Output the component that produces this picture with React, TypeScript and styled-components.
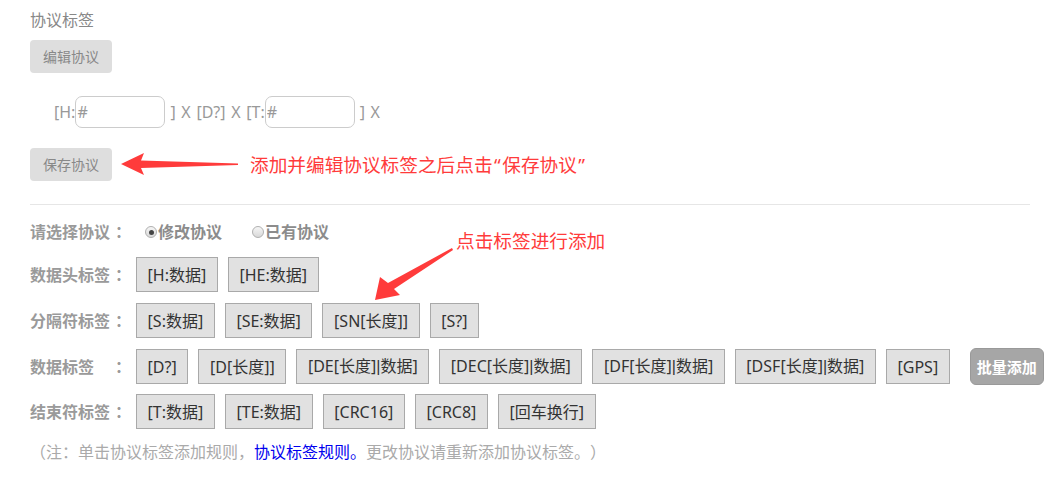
import React from "react";
import styled, { createGlobalStyle } from "styled-components";

const GlobalStyle = createGlobalStyle`
  html, body { margin: 0; padding: 0; background: #fff; }
  body {
    font-family: "Noto Sans", "Noto Sans CJK SC", sans-serif;
    font-size: 16px;
    text-spacing-trim: space-all;
  }
  * { box-sizing: border-box; }
`;

const Page = styled.div`
  padding: 10px 29px 0 30px;
  width: 1059px;
`;

const Title = styled.div`
  font-size: 16px;
  line-height: 20px;
  color: #888;
`;

const GrayButton = styled.button<{ $top: number }>`
  display: block;
  margin-top: ${(p) => p.$top}px;
  width: 82px;
  height: 33px;
  padding: 0;
  border: none;
  border-radius: 4px;
  background: #dedede;
  color: #888;
  font-family: inherit;
  font-size: 14px;
  line-height: 33px;
  cursor: pointer;
`;

const InputRow = styled.div`
  display: flex;
  align-items: center;
  margin-top: 23px;
  padding-left: 24px;
  height: 32px;
  color: #999;
  font-size: 16px;
  line-height: 20px;
  white-space: pre;
  word-spacing: 1.5px;
`;

const TagInput = styled.input`
  width: 90px;
  height: 32px;
  padding: 0 0 0 1px;
  border: 1px solid #ccc;
  border-radius: 7px;
  font-family: inherit;
  font-size: 16px;
  color: #999;
  outline: none;
  margin-right: 5px;
`;

const SaveRow = styled.div`
  display: flex;
  align-items: center;
  margin-top: 20px;
`;

const Hint = styled.span`
  color: #ff3b3b;
  font-size: 18.67px;
  line-height: 24px;
  white-space: nowrap;
`;

const Quote = styled.span`
  margin: 0 1.5px;
`;

const ArrowSvg = styled.svg`
  display: block;
  margin: 0 12px 0 9px;
  flex: none;
`;

const Divider = styled.hr`
  margin: 23px 0 0 0;
  border: none;
  border-top: 1px solid #e6e6e6;
  height: 0;
`;

const TagSection = styled.div`
  position: relative;
  padding-top: 16px;
`;

const Row = styled.div<{ $top: number }>`
  display: flex;
  align-items: center;
  flex-wrap: nowrap;
  gap: 10px;
  margin-top: ${(p) => p.$top}px;
`;

const Label = styled.div`
  display: flex;
  justify-content: space-between;
  width: 96px;
  flex: none;
  font-size: 16px;
  line-height: 22px;
  font-weight: 700;
  color: #9a9a9a;
  white-space: nowrap;
`;

const Colon = styled.span`
  padding-left: 5px;
  margin-right: -5px;
`;

const RadioGroup = styled.div`
  display: flex;
  align-items: center;
  margin-left: 9px;
  gap: 30px;
`;

const RadioOption = styled.label`
  display: flex;
  align-items: center;
  gap: 1px;
  font-size: 16px;
  line-height: 22px;
  font-weight: 700;
  color: #8c8c8c;
`;

const RadioDot = styled.span<{ $checked?: boolean }>`
  position: relative;
  width: 12px;
  height: 12px;
  border-radius: 50%;
  border: 1px solid #b0b0b0;
  background: linear-gradient(#f6f6f6, #d8d8d8);
  &::after {
    content: "";
    display: ${(p) => (p.$checked ? "block" : "none")};
    position: absolute;
    left: 2.5px;
    top: 2.5px;
    width: 5px;
    height: 5px;
    border-radius: 50%;
    background: #444;
  }
`;

const Tag = styled.button`
  flex: none;
  height: 35px;
  padding: 0 10.6px;
  border: 1px solid #a9a9a9;
  background: #e1e1e1;
  color: #333;
  font-family: inherit;
  font-size: 16px;
  line-height: 20px;
  white-space: nowrap;
  cursor: pointer;
`;

const Bar = styled.span`
  font-family: "Liberation Sans", sans-serif;
`;

const BatchButton = styled.button`
  flex: none;
  margin-left: 10px;
  height: 37px;
  width: 74px;
  padding: 0;
  border: 1px solid #999;
  border-radius: 6px;
  background: #a6a6a6;
  color: #fff;
  font-family: inherit;
  font-size: 15px;
  font-weight: 700;
  cursor: pointer;
`;

const Note = styled.div`
  margin-top: 13px;
  font-size: 16px;
  line-height: 20px;
  color: #aaa;
  white-space: nowrap;
`;

const NoteLink = styled.a`
  color: #0000ee;
  text-decoration: none;
`;

const ClickHint = styled(Hint)`
  position: absolute;
  left: 426px;
  top: 24px;
`;

const ClickArrow = styled.svg`
  position: absolute;
  left: 340px;
  top: 40px;
`;

const rows: { label: string; tags: string[]; batch?: boolean; top: number }[] = [
  { label: "数据头标签", tags: ["[H:数据]", "[HE:数据]"], top: 14 },
  { label: "分隔符标签", tags: ["[S:数据]", "[SE:数据]", "[SN[长度]]", "[S?]"], top: 11 },
  {
    label: "数据标签",
    tags: [
      "[D?]",
      "[D[长度]]",
      "[DE[长度]|数据]",
      "[DEC[长度]|数据]",
      "[DF[长度]|数据]",
      "[DSF[长度]|数据]",
      "[GPS]",
    ],
    batch: true,
    top: 10,
  },
  { label: "结束符标签", tags: ["[T:数据]", "[TE:数据]", "[CRC16]", "[CRC8]", "[回车换行]"], top: 9 },
];

function TagText({ text }: { text: string }) {
  const parts = text.split("|");
  return (
    <>
      {parts.map((p, i) => (
        <React.Fragment key={i}>
          {i > 0 && <Bar>|</Bar>}
          {p}
        </React.Fragment>
      ))}
    </>
  );
}

export default function App() {
  return (
    <>
      <GlobalStyle />
      <Page>
        <Title>协议标签</Title>
        <GrayButton $top={10}>编辑协议</GrayButton>
        <InputRow>
          <span>[H:</span>
          <TagInput defaultValue="#" />
          <span>] X [D?] X [T:</span>
          <TagInput defaultValue="#" />
          <span>] X</span>
        </InputRow>
        <SaveRow>
          <GrayButton $top={0}>保存协议</GrayButton>
          <ArrowSvg width="117" height="24" viewBox="0 0 117 24">
            <polygon points="0,11 23,0 20,7.5 117,10.5 117,12 20,15 23,22" fill="#ff3b3b" />
          </ArrowSvg>
          <Hint>
            添加并编辑协议标签之后点击<Quote>“</Quote>保存协议<Quote>”</Quote>
          </Hint>
        </SaveRow>
        <Divider />
        <TagSection>
          <Row $top={0}>
            <Label>
              <span>请选择协议</span>
              <Colon>：</Colon>
            </Label>
            <RadioGroup>
              <RadioOption>
                <RadioDot $checked />
                修改协议
              </RadioOption>
              <RadioOption>
                <RadioDot />
                已有协议
              </RadioOption>
            </RadioGroup>
          </Row>
          {rows.map((r) => (
            <Row key={r.label} $top={r.top}>
              <Label>
                <span>{r.label}</span>
                <Colon>：</Colon>
              </Label>
              {r.tags.map((t) => (
                <Tag key={t}>
                  <TagText text={t} />
                </Tag>
              ))}
              {r.batch && <BatchButton>批量添加</BatchButton>}
            </Row>
          ))}
          <ClickHint>点击标签进行添加</ClickHint>
          <ClickArrow width="90" height="62" viewBox="0 0 90 62">
            <polygon points="82,3 18,38 10,32 5,55 30,50 24,44 83,5" fill="#ff3b3b" />
          </ClickArrow>
          <Note>
            （注：单击协议标签添加规则，<NoteLink href="#">协议标签规则。</NoteLink>更改协议请重新添加协议标签。）
          </Note>
        </TagSection>
      </Page>
    </>
  );
}
